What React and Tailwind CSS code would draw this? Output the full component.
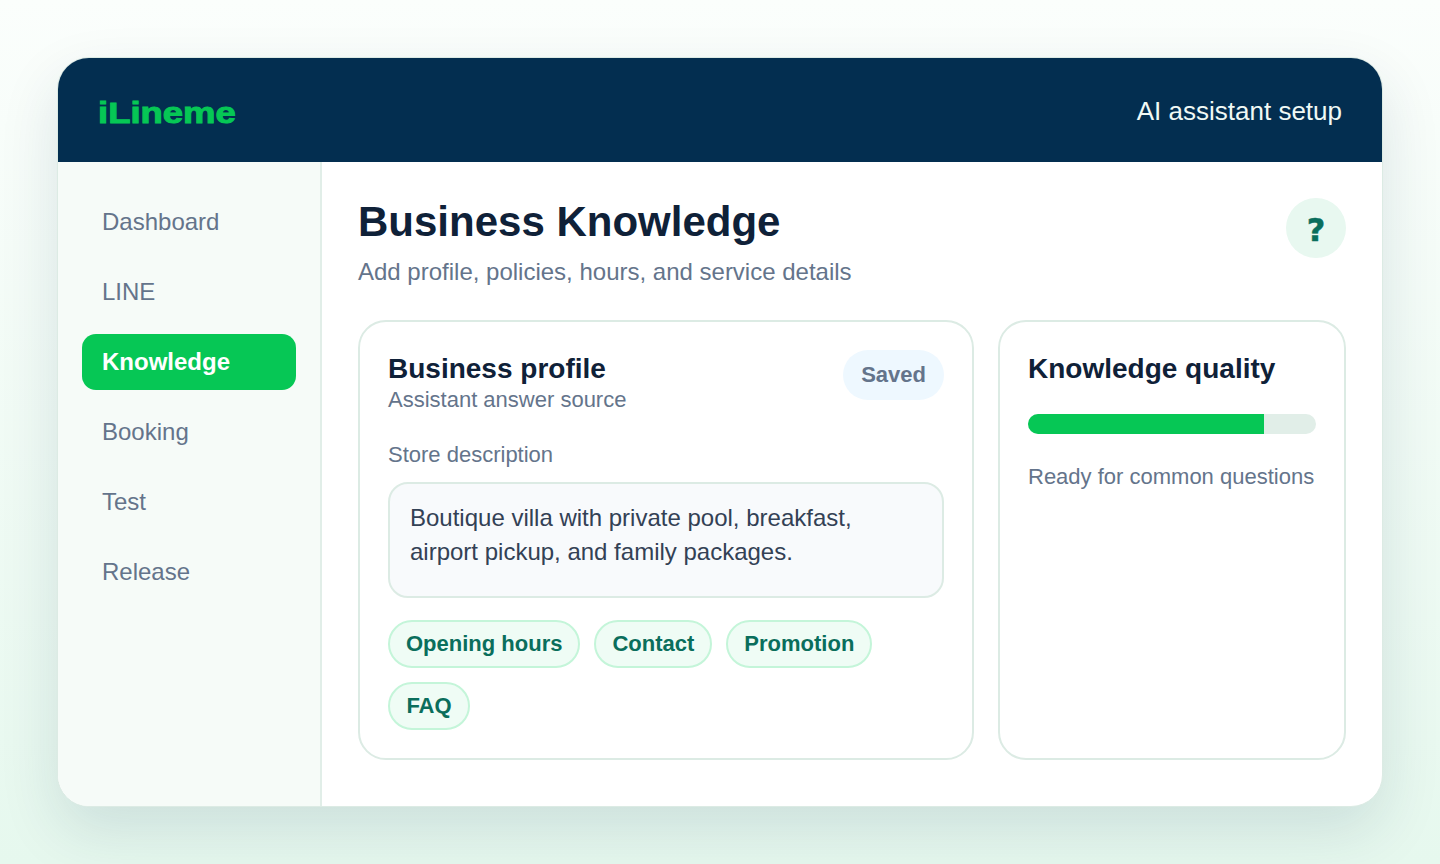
const nav = ["Dashboard", "LINE", "Knowledge", "Booking", "Test", "Release"];
const tags = ["Opening hours", "Contact", "Promotion", "FAQ"];

export default function App() {
  return (
    <div className="h-[864px] w-[1440px] overflow-hidden bg-gradient-to-b from-[#fbfefc] to-[#e6f8ee] pl-[57px] pt-[57px] font-['Liberation_Sans',Arial,sans-serif]">
      <div className="flex h-[750px] w-[1326px] flex-col overflow-hidden rounded-[32px] border border-[#dcebe4] bg-white shadow-[0_24px_60px_rgba(3,46,80,0.12)]">
        <header className="flex h-[104px] shrink-0 items-center justify-between bg-[#032e50] px-10">
          <div className="origin-left scale-x-[1.215] pt-[6px] text-[30px] font-bold leading-none text-[#06c755] [-webkit-text-stroke:1px_#06c755]">iLineme</div>
          <div className="pt-0.5 text-[26px] leading-none text-[#f0f9f5]">AI assistant setup</div>
        </header>
        <div className="flex min-h-0 flex-1">
          <aside className="flex w-[264px] shrink-0 flex-col gap-[14px] border-r-2 border-[#e1eee8] bg-[#f6fbf8] pl-6 pr-6 pt-8">
            {nav.map((n) => (
              <div
                key={n}
                className={n === "Knowledge"
                  ? "flex h-14 w-[214px] items-center rounded-[14px] bg-[#06c755] px-5 text-2xl font-bold text-white"
                  : "flex h-14 w-[214px] items-center rounded-[14px] px-5 text-2xl text-[#64748b]"}
              >
                {n}
              </div>
            ))}
          </aside>
          <main className="flex min-w-0 flex-1 flex-col px-9 pt-9">
            <div className="flex items-start justify-between">
              <div>
                <h1 className="text-[42px] font-bold leading-[48px] text-[#0f2138]">Business Knowledge</h1>
                <p className="mt-[10px] text-2xl leading-8 text-[#64748b]">Add profile, policies, hours, and service details</p>
              </div>
              <div className="flex h-[60px] w-[60px] items-center justify-center rounded-full bg-[#e8f8f0] pt-1 font-['DejaVu_Sans',sans-serif] text-[32px] font-bold leading-none text-[#0a6e5c] [-webkit-text-stroke:0.5px_#0a6e5c]">?</div>
            </div>
            <div className="mt-[32px] flex gap-6">
              <section className="h-[440px] w-[616px] rounded-[28px] border-2 border-[#dcebe4] bg-white px-7 pt-7">
                <div className="flex items-start justify-between">
                  <div>
                    <h2 className="pt-px text-[28px] font-bold leading-9 text-[#0f2138]">Business profile</h2>
                    <p className="-mt-px text-[22px] leading-[28px] text-[#64748b]">Assistant answer source</p>
                  </div>
                  <span className="flex h-[50px] items-center rounded-full bg-[#eef8ff] px-[18px] pb-0.5 text-[22px] font-bold text-[#64748b]">Saved</span>
                </div>
                <div className="mt-[25px] text-[22px] leading-8 text-[#64748b]">Store description</div>
                <div className="mt-[11px] h-[116px] rounded-[20px] border-2 border-[#dcebe4] bg-[#f8fafc] px-5 pt-[17px] text-2xl leading-[34px] text-[#334155]">
                  Boutique villa with private pool, breakfast,<br />airport pickup, and family packages.
                </div>
                <div className="mt-[22px] flex flex-wrap gap-x-[14px] gap-y-[14px]">
                  {tags.map((t) => (
                    <span key={t} className="flex h-12 min-w-[82px] items-center justify-center rounded-full border-2 border-[#c4f5d9] bg-[#effcf5] px-4 pb-0.5 text-[22px] font-bold text-[#0a6e5c]">{t}</span>
                  ))}
                </div>
              </section>
              <section className="h-[440px] w-[348px] rounded-[28px] border-2 border-[#dcebe4] bg-white px-7 pt-7">
                <h2 className="pt-px text-[28px] font-bold leading-9 text-[#0f2138]">Knowledge quality</h2>
                <div className="mt-[27px] h-5 overflow-hidden rounded-full bg-[#e1eee8]">
                  <div className="h-full w-[82%] bg-[#06c755]"></div>
                </div>
                <p className="mt-[27px] whitespace-nowrap text-[22px] leading-8 text-[#64748b]">Ready for common questions</p>
              </section>
            </div>
          </main>
        </div>
      </div>
    </div>
  );
}
